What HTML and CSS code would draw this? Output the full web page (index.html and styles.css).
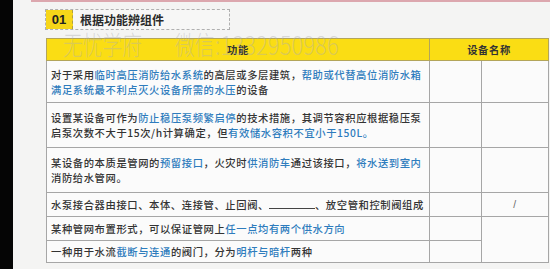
FILE: index.html
```html
<!DOCTYPE html>
<html lang="zh">
<head>
<meta charset="utf-8">
<link rel="stylesheet" href="styles.css">
</head>
<body>
<div class="screen">
  <div class="strip"></div>
  <div class="main">
    <div class="topbar"></div>
    <div class="title">
      <span class="badge">01</span>
      <span class="title-text">根据功能辨组件</span>
    </div>
    <div class="table-wrap">
      <table class="grid">
        <colgroup>
          <col class="c1"><col class="c2"><col class="c3">
        </colgroup>
        <thead>
          <tr class="h">
            <th>功能</th>
            <th colspan="2">设备名称</th>
          </tr>
        </thead>
        <tbody>
          <tr class="r1">
            <td class="fn">对于采用<span class="b">临时高压消防给水系统</span>的高层或多层建筑，<span class="b">帮助或代替高位消防水箱</span><br><span class="b">满足系统最不利点灭火设备所需的水压</span>的设备</td>
            <td></td><td></td>
          </tr>
          <tr class="r2">
            <td class="fn">设置某设备可作为<span class="b">防止稳压泵频繁启停</span>的技术措施，其调节容积应根据稳压泵<br>启泵次数不大于15次/h计算确定，但<span class="b">有效储水容积不宜小于150L。</span></td>
            <td></td><td></td>
          </tr>
          <tr class="r3">
            <td class="fn">某设备的本质是管网的<span class="b">预留接口</span>，火灾时<span class="b">供消防车</span>通过该接口，<span class="b">将水送到室内</span><br>消防给水管网。</td>
            <td></td><td></td>
          </tr>
          <tr class="r4">
            <td class="fn">水泵接合器由接口、本体、连接管、止回阀、<span class="blank"></span>、放空管和控制阀组成</td>
            <td></td><td class="mid">/</td>
          </tr>
          <tr class="r5">
            <td class="fn">某种管网布置形式，可以保证管网上<span class="b">任一点均有两个供水方向</span></td>
            <td></td><td rowspan="2"></td>
          </tr>
          <tr class="r6">
            <td class="fn">一种用于水流<span class="b">截断与连通</span>的阀门，分为<span class="b">明杆与暗杆</span>两种</td>
            <td></td>
          </tr>
        </tbody>
      </table>
      <div class="watermark"><span class="wm-a">无忧学府</span><span class="wm-b">微信</span><span class="wm-c">:1332950986</span></div>
    </div>
  </div>
</div>
</body>
</html>
```

FILE: styles.css
```css
html, body {
  margin: 0;
  padding: 0;
}
body {
  width: 550px;
  height: 269px;
  overflow: hidden;
  background: #f3f3f3;
  font-family: "Noto Sans CJK SC", "Noto Sans", sans-serif;
  color: #333;
}
.screen {
  display: flex;
  height: 269px;
}
.strip {
  width: 13px;
  flex: none;
  background: #050505;
}
.main {
  flex: 1;
  display: flex;
  flex-direction: column;
  background: #f4f4f3;
}
.topbar {
  height: 2px;
  margin-left: 18px;
  background: #dca7ae;
}
.title {
  margin: 7px 0 0 32px;
  width: 183px;
  height: 19px;
  border: 1px dashed #b0b0b0;
  display: flex;
  align-items: center;
  background: #f7f7f6;
}
.badge {
  width: 26px;
  height: 19px;
  background: #f7d619;
  border-right: 1px dashed #b0a040;
  display: flex;
  align-items: center;
  justify-content: center;
  font-family: "Liberation Sans", sans-serif;
  font-weight: bold;
  font-size: 13px;
  color: #222;
}
.title-text {
  margin-left: 7px;
  font-size: 12px;
  font-weight: 700;
  color: #2a2a2a;
}
.table-wrap {
  position: relative;
  margin: 8px 0 0 33px;
}
.grid {
  border-collapse: collapse;
  table-layout: fixed;
  width: 503px;
  background: #fbfbfb;
}
.c1 { width: 383px; }
.c2 { width: 52px; }
.c3 { width: 67px; }
.grid th, .grid td {
  border: 1px solid #a6a6a6;
  padding: 0 0 0 4px;
  font-size: 10.3px;
  letter-spacing: 0.6px;
  line-height: 15px;
  vertical-align: middle;
  font-weight: 500;
  color: #333;
}
.grid td.fn {
  white-space: nowrap;
}
.grid th {
  background: #fadd14;
  border-color: #b3a55a;
  font-weight: 700;
  text-align: center;
  padding: 0;
  height: 21px;
}
.r1 td { height: 41px; }
.r2 td { height: 44px; }
.r3 td { height: 44px; }
.r4 td { height: 23px; }
.r5 td { height: 23px; }
.r6 td { height: 21px; }
.b {
  color: #2e7cbd;
}
.blank {
  display: inline-block;
  width: 46px;
  border-bottom: 1px solid #444;
  height: 10px;
}
.grid td.mid {
  text-align: center;
  padding: 0;
  color: #666;
  font-family: "Liberation Sans", sans-serif;
}
.watermark {
  position: absolute;
  left: 17px;
  top: -7px;
  display: flex;
  font-size: 26px;
  line-height: 26px;
  height: 26px;
  font-weight: 300;
  color: rgba(175, 175, 175, 0.42);
  white-space: nowrap;
  pointer-events: none;
}
.wm-a, .wm-b {
  display: inline-block;
  height: 26px;
  transform: scaleX(0.76);
  transform-origin: left top;
}
.wm-a { width: 112px; }
.wm-b { width: 40px; }
.wm-c {
  display: inline-block;
  height: 26px;
  transform: scaleX(0.85);
  transform-origin: left top;
}
```
